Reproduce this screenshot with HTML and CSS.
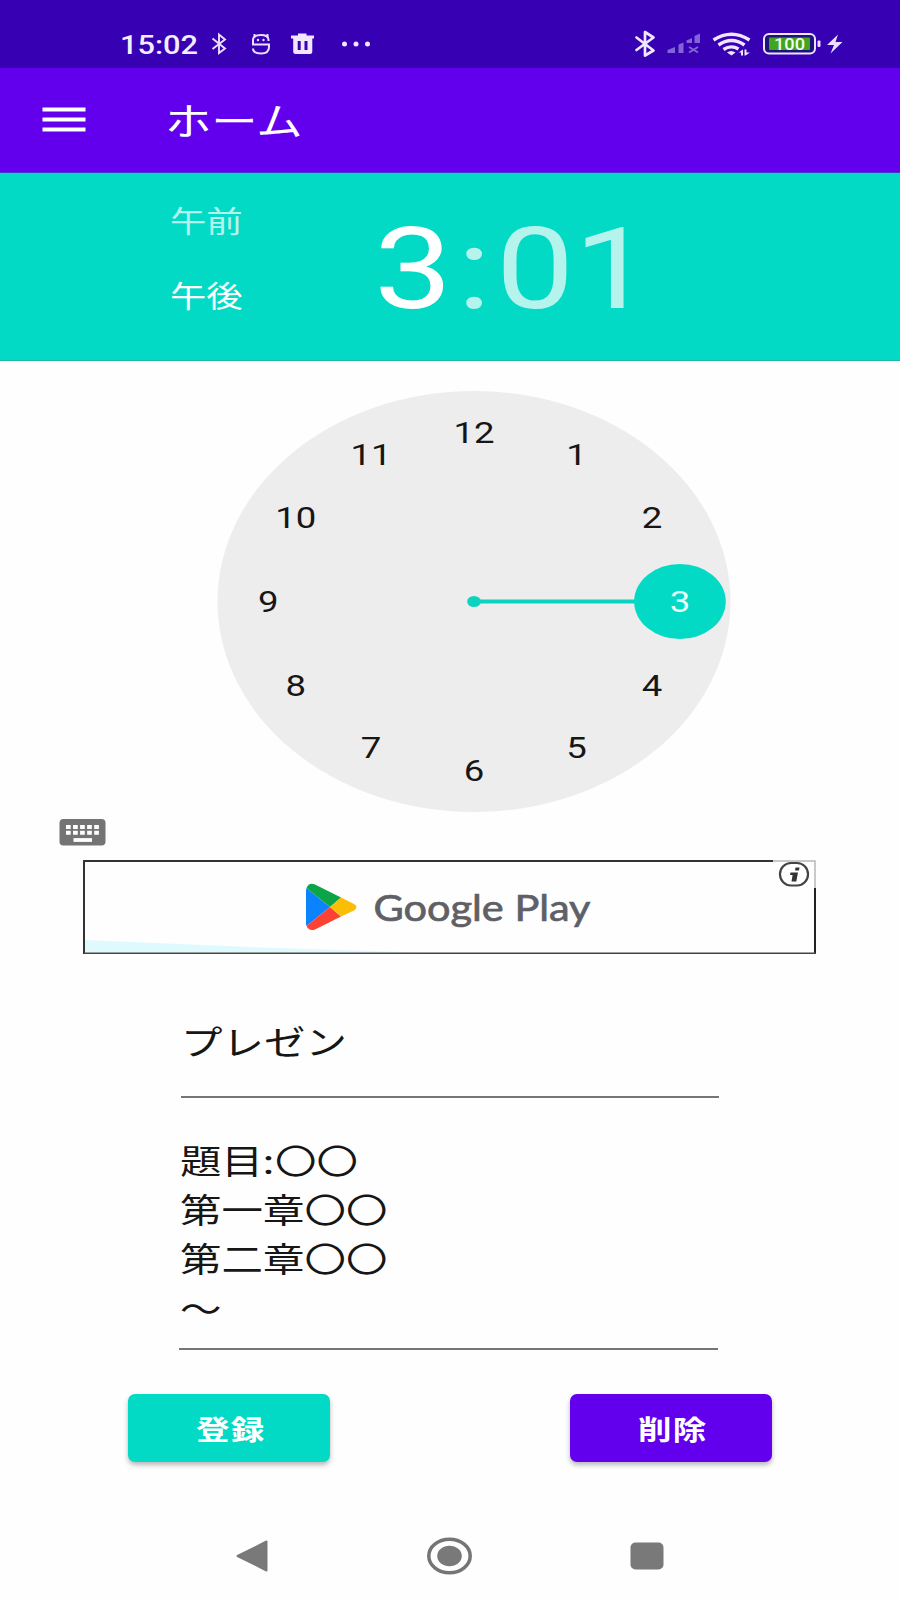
FILE: index.html
```html
<!DOCTYPE html>
<html lang="ja">
<head>
<meta charset="utf-8">
<title>ホーム</title>
<link rel="stylesheet" href="styles.css">
</head>
<body>
<div class="screen">
  <header class="status">
    <div class="status-left">
      <span class="status-time"><span class="wide">15:02</span></span>
      <svg class="status-icons" width="170" height="40" viewBox="208 24 170 40">
        <path d="M212.500 38.500L225 48.500L219 53V34.500L225 39.500L212.500 49" fill="none" stroke="#eadfff" stroke-width="1.900"/>
        <g fill="none" stroke="#eadfff" stroke-width="2">
          <path d="M268.500 41V39.500Q268 35 261 35Q253 35 253 40V44.500H269V47Q269 53.500 261 53.500Q253 53.500 253 48.500"/>
          <path d="M254.500 37.500V34M267.500 37.500V34"/>
        </g>
        <circle cx="258" cy="40" r="1.200" fill="#eadfff"/><circle cx="263.500" cy="40" r="1.200" fill="#eadfff"/>
        <path fill="#f0e6ff" fill-rule="evenodd" d="M291 35.500H298V33.500H306.500V35.500H314V38.500H312.300V52Q312.300 54 310 54H295.500Q293.200 54 293.200 52V38.500H291ZM297.700 41V50H300.700V41ZM304.500 41V50H307.500V41Z"/>
        <g fill="#f0e6ff"><circle cx="344.500" cy="44" r="2.500"/><circle cx="356" cy="44" r="2.500"/><circle cx="367.500" cy="44" r="2.500"/></g>
      </svg>
    </div>
    <svg width="220" height="40" viewBox="630 24 220 40">
      <path d="M636.500 37.500L653.500 50.500L645 55.500V32L653.500 37.500L636.500 50" fill="none" stroke="#f0e6ff" stroke-width="2.700" stroke-linejoin="round" stroke-linecap="round"/>
      <g fill="#8264d6"><path d="M667.500 53V50L675 47V53ZM678.500 53V44.500L683.500 42.500V53ZM686.500 43V40.500L692 38V43ZM694.500 43V36L700 33.500V43Z"/></g>
      <path d="M689 47L698 52.500M698 47L689 52.500" stroke="#8264d6" stroke-width="2"/>
      <g fill="none" stroke="#f0e6ff" stroke-width="3.400">
        <path d="M713.500 40Q731.500 28.500 749.500 40"/><path d="M718.500 45Q731.500 36 744.500 45"/><path d="M723.500 49.500Q731 44.500 738.500 49"/>
      </g>
      <path d="M727 52.500Q731 49.500 735.500 52.500L731.500 55.500Z" fill="#f0e6ff"/>
      <path d="M738.500 52.500L743 49.500V55.500H741V52.500ZM744.500 55.500V49.500H746.500V52.500H750L745.500 55.500Z" fill="#f0e6ff"/>
      <rect x="764" y="34" width="51" height="19.500" rx="5" fill="#20127d" stroke="#eee4ff" stroke-width="2"/>
      <rect x="769" y="37.500" width="41" height="12.500" rx="1" fill="#43a51f"/>
      <text class="battery" x="789.500" y="49.700" text-anchor="middle" textLength="31" lengthAdjust="spacingAndGlyphs">100</text>
      <rect x="817.500" y="40.500" width="3" height="6.500" rx="1" fill="#eadfff"/>
      <path d="M838 34.500L827 45H834L830.500 53.500L842.500 42H835.500Z" fill="#eadfff"/>
    </svg>
  </header>

  <nav class="appbar">
    <svg width="44" height="26" viewBox="0 0 44 26"><path d="M0.500 2.500H43.500M0.500 12.500H43.500M0.500 22.500H43.500" stroke="#fff" stroke-width="3.900"/></svg>
    <h1 class="wide">ホーム</h1>
  </nav>

  <section class="time-panel">
    <div class="periods">
      <span class="wide dim">午前</span>
      <span class="wide">午後</span>
    </div>
    <div class="time">
      <span class="digits">3</span><span class="colon dim">:</span><span class="digits dim">0</span><span class="digits dim">1</span>
    </div>
  </section>

  <main>
    <svg class="clock" width="514" height="421" viewBox="0 0 421.800 421" preserveAspectRatio="none">
      <circle cx="210.900" cy="210.500" r="210.500" fill="#ededed"/>
      <path d="M210.900 210.500H345" stroke="#0cd3c0" stroke-width="4"/>
      <circle cx="210.900" cy="210.500" r="5.600" fill="#0cd3c0"/>
      <circle cx="379.900" cy="210.500" r="37.600" fill="#03dac5"/>
      <g class="hours">
        <text x="210.900" y="52">12</text><text x="295" y="74.500">1</text><text x="356.900" y="136.700">2</text>
        <text x="379.900" y="221">3</text><text x="356.900" y="305.500">4</text><text x="295" y="367">5</text>
        <text x="210.900" y="389.900">6</text><text x="126.400" y="367">7</text><text x="64.600" y="305.500">8</text>
        <text x="42" y="221">9</text><text x="64.600" y="136.700">10</text><text x="126.400" y="74.500">11</text>
      </g>
    </svg>

    <svg class="keyboard" width="47" height="27" viewBox="0 0 47 27">
      <rect x="0.500" width="46" height="26.500" rx="4" fill="#747474"/>
      <path d="M7 8H40M7 13.800H40" stroke="#fff" stroke-width="4" stroke-dasharray="4.700 2.350"/>
      <path d="M14.500 21H33" stroke="#fff" stroke-width="3.800"/>
    </svg>

    <svg class="ad" width="734" height="94" viewBox="83 860 734 94">
      <rect x="84" y="861" width="732" height="92" fill="#fefefe"/>
      <path d="M85 940L250 947L420 952.500H85Z" fill="#dffafd"/>
      <path d="M84 954V861H773" fill="none" stroke="#333" stroke-width="2"/>
      <path d="M773 861H815V888" fill="none" stroke="#b8b8b8" stroke-width="1.500"/>
      <path d="M815 888V953.200" stroke="#222" stroke-width="2"/>
      <path d="M84 953.200H816" stroke="#444" stroke-width="1.500"/>
      <path d="M306.500 888L330 907L306.500 926Q306 925 306 923V890Z" fill="#0b83ff"/>
      <path d="M306.500 888Q309 882 315 884.500L341 897.500L330 907Z" fill="#0ba548"/>
      <path d="M306.500 926Q309 931.500 315 929.500L341 916.500L330 907Z" fill="#fc4232"/>
      <path d="M341 897.500L354 904Q359 907 354 910.500L341 916.500L330 907Z" fill="#fcbd07"/>
      <text class="ad-brand" x="373.500" y="920.500" textLength="217" lengthAdjust="spacingAndGlyphs">Google Play</text>
      <rect x="780" y="863" width="28" height="22.500" rx="11" fill="#fff" stroke="#444" stroke-width="2.200"/>
      <path d="M795.500 867.500H799.500L799 870.500H795ZM790.500 872.500H798L796.300 881.500H791.500L792.600 875H790Z" fill="#333"/>
    </svg>

    <div class="field title-field"><span class="wide">プレゼン</span></div>
    <div class="field memo-field"><div class="wide">題目<b class="memo-colon">:</b>〇〇<br>第一章〇〇<br>第二章〇〇<br>～</div></div>

    <div class="actions">
      <button class="btn save"><span class="wide">登録</span></button>
      <button class="btn delete"><span class="wide">削除</span></button>
    </div>
  </main>

  <footer class="sysnav">
    <svg width="32" height="34" viewBox="0 0 32 34"><path d="M1.500 17L30.500 2.500V31.500Z" fill="#797979" stroke="#797979" stroke-width="2" stroke-linejoin="round"/></svg>
    <svg width="46" height="38" viewBox="0 0 46 38"><ellipse cx="23.500" cy="19" rx="20.700" ry="16.700" fill="none" stroke="#757575" stroke-width="3.500"/><ellipse cx="23.500" cy="19" rx="12.300" ry="10.300" fill="#797979"/></svg>
    <svg width="34" height="28" viewBox="0 0 34 28"><rect x="0.500" y="0.500" width="33" height="27" rx="5" fill="#797979"/></svg>
  </footer>
</div>
</body>
</html>
```
FILE: styles.css
```css
* { box-sizing: border-box; }
body { margin: 0; background: #fefefe; }
svg { display: block; flex: none; }
.screen {
  width: 900px;
  height: 1600px;
  display: flex;
  flex-direction: column;
  overflow: hidden;
  color: #161616;
  font-family: Roboto, "Noto Sans CJK JP", sans-serif;
}
.wide {
  display: inline-block;
  white-space: nowrap;
  transform: scaleX(1.22);
  transform-origin: left center;
}
.status {
  height: 68px;
  padding: 24px 50px 0 120px;
  display: flex;
  justify-content: space-between;
  background: #3700b3;
}
.status-left { display: flex; }
.status-time {
  width: 88px;
  font-size: 25.200px;
  font-weight: 500;
  line-height: 43px;
  color: #f4ecff;
}
.battery { font: 500 16px Roboto, sans-serif; fill: #f4fff0; }
.appbar {
  height: 105px;
  padding: 0 42px;
  display: flex;
  align-items: center;
  gap: 79px;
  background: #6200ee;
  color: #fff;
  border-bottom: 1px solid #4a36cf;
}
.appbar h1 { margin: 4px 0 0; font-size: 38px; font-weight: 400; line-height: 48px; }
.time-panel {
  height: 188px;
  padding: 11px 0 0 169.500px;
  display: flex;
  background: #03dac5;
  border-bottom: 1px solid #1fb5a8;
  color: #fff;
}
.dim { opacity: 0.7; }
.periods {
  width: 204.500px;
  display: flex;
  flex-direction: column;
  align-items: flex-start;
  font-size: 29.800px;
  line-height: 75px;
}
.time { display: flex; font-size: 114px; line-height: 171px; }
.digits, .colon { width: 78px; text-align: center; transform: scaleX(1.22); }
.colon { width: 44px; }
.clock { margin: 30px 0 0 217px; }
.hours text {
  font: 400 30px Roboto, sans-serif;
  fill: #161616;
  text-anchor: middle;
}
.hours text:nth-child(4) { fill: #e8fffb; }
.keyboard { margin: 7px 0 0 59px; }
.ad { margin: 14px 0 0 83px; }
.ad-brand { font: 400 37px Lato, sans-serif; fill: #5f6066; stroke: #5f6066; stroke-width: 0.700px; }
.field { width: 538px; border-bottom: 2px solid #757575; font-size: 34px; }
.title-field { height: 78px; margin: 66px 0 0 181px; padding-left: 0; line-height: 47px; }
.memo-field { height: 213px; width: 539px; margin: 39px 0 0 179px; padding: 1px 0 0 0.500px; line-height: 49.200px; }
.memo-colon { margin-right: 1px; font-weight: 500; }
.actions {
  margin: 44px 128px 0;
  display: flex;
  justify-content: space-between;
}
.btn {
  width: 202px;
  height: 68px;
  padding: 0 0 0 68px;
  border: 0;
  border-radius: 7px;
  text-align: left;
  font: 700 27.500px/67px "Noto Sans CJK JP", sans-serif;
  letter-spacing: 1px;
  color: #fff;
  box-shadow: 0 3px 5px rgba(0, 0, 0, 0.28);
}
.save { background: #03dac5; }
.delete { background: #6200ee; }
.sysnav {
  margin-top: 75px;
  padding: 0 236px;
  height: 38px;
  display: flex;
  align-items: center;
  justify-content: space-between;
}
```
